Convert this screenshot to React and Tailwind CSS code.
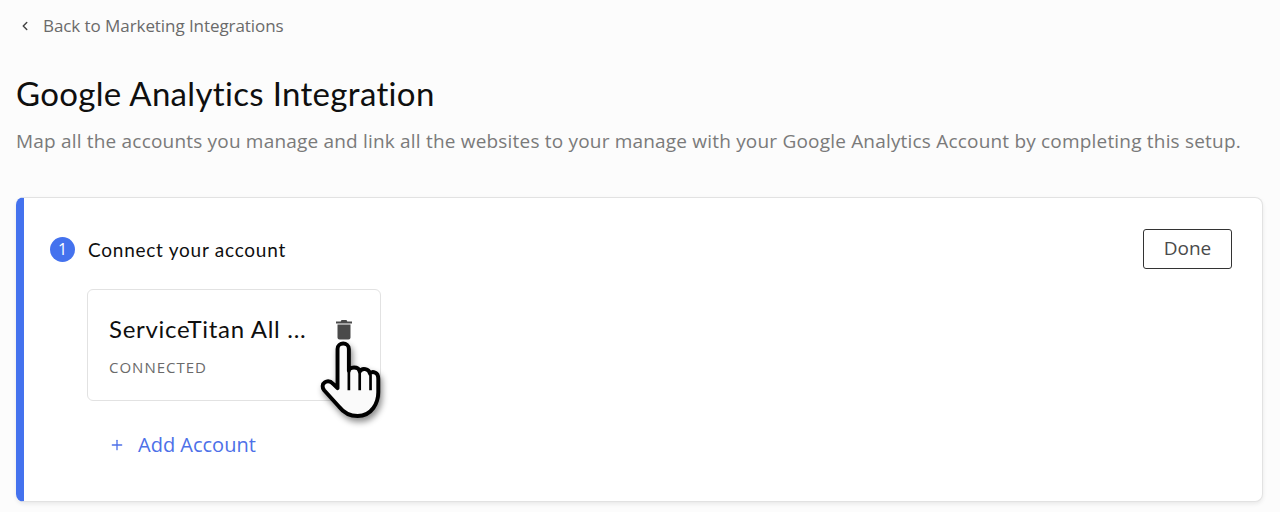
import { ChevronLeft, Plus } from "lucide-react";

const bodyFont = "font-['Open_Sans','Lato',sans-serif]";
const headFont = "font-['Lato','Noto_Sans',sans-serif]";

function TrashIcon() {
  return (
    <svg width="18" height="21" viewBox="0 0 18 21" className="block">
      <path d="M6.5 1h5l.8 1.400H17v2H1v-2h4.700z" fill="#4a4a4a" />
      <path d="M2.500 5.500h13v13.100c0 1.200-.9 2-2 2h-9c-1.100 0-2-.8-2-2z" fill="#4a4a4a" />
    </svg>
  );
}

// pointer cursor drawn over the card
function HandCursor() {
  return (
    <svg width="66" height="86" viewBox="0 0 64 82" className="block drop-shadow-[2px_4px_3px_rgba(0,0,0,0.45)]">
      <path
        d="M17 40V8c0-7 11-7 11 0v21c0-1 1-3 5-3 3 0 5 1 5.500 4 1-2 3-3 5.500-2.500 2.500.5 4 2 4.500 4.500 1-1.500 3-2 5-1 2.500 1 3 3.500 3 6v13c0 10-6 23-20 23-8 0-13-2.500-18-9L4 48c-2-2.500-2-6 .5-7.500 3-2 6-1 8.500 1.500l4 4z"
        fill="#fafafa"
        stroke="#000"
        strokeWidth="3.800"
        strokeLinejoin="round"
      />
      <path d="M28 29v19M38.500 30v18M49 33v15" fill="none" stroke="#000" strokeWidth="2.600" />
    </svg>
  );
}

export default function App() {
  return (
    <div className={`h-[512px] w-[1280px] overflow-hidden bg-[#fcfcfc] px-4 pt-4 ${bodyFont}`}>
      {/* Back link */}
      <div className="flex h-5 items-center text-[#6a6a6a]">
        <ChevronLeft size={14} strokeWidth={2.500} className="ml-[2px] text-[#444]" />
        <span className="ml-[11px] text-[17px] leading-5 tracking-[-0.07px]">Back to Marketing Integrations</span>
      </div>

      {/* Page Header */}
      <h1 className={`mt-[37px] text-[33px] leading-[40px] tracking-[0.33px] text-[#0f0f0f] ${headFont}`}>
        Google Analytics Integration
      </h1>
      <p className="mt-[14px] text-[19px] leading-7 tracking-[0.19px] whitespace-nowrap text-[#7a7a7a]">
        Map all the accounts you manage and link all the websites to your manage with your Google Analytics Account by completing this setup.
      </p>

      {/* Step Card */}
      <div className="mt-[42px] h-[305px] w-[1247px] rounded-lg border border-[#e2e2e2] border-l-8 border-l-[#4472ee] bg-white pt-[31px] pr-[30px] pl-[26px] shadow-[0_2px_4px_rgba(0,0,0,0.08)]">
        <div className="flex items-start justify-between">
          <div className="flex h-10 items-center">
            <span className="flex h-[25px] w-[25px] items-center justify-center rounded-full bg-[#4472ee] text-[16px] font-medium text-white">
              1
            </span>
            <span className={`relative top-[1px] ml-[13px] text-[19px] tracking-[0.75px] text-[#0f0f0f] ${headFont}`}>
              Connect your account
            </span>
          </div>
          <button className="h-10 w-[89px] rounded-[3px] border border-[#333] pb-[2px] text-[19px] text-[#4a4a4a]">
            Done
          </button>
        </div>

        <div className="relative mt-[20px] ml-[37px] h-[112px] w-[294px] rounded-md border border-[#e2e2e2] bg-white pt-[23px] pl-[21px]">
          <div className="flex items-center">
            <span className={`w-[200px] text-[24px] leading-8 tracking-[0.7px] whitespace-nowrap text-[#0f0f0f] ${headFont}`}>
              ServiceTitan All ...
            </span>
            <span className="ml-[26px]">
              <TrashIcon />
            </span>
          </div>
          <div className="mt-[12px] text-[15px] leading-5 tracking-[1px] text-[#6a6a6a]">CONNECTED</div>
          <div className="absolute top-[50px] left-[232px]">
            <HandCursor />
          </div>
        </div>

        <div className="mt-[32px] ml-[59px] flex h-6 items-center text-[#4d70e8]">
          <Plus size={16} strokeWidth={2} />
          <span className="ml-[13px] text-[20px] leading-6">Add Account</span>
        </div>
      </div>
    </div>
  );
}
